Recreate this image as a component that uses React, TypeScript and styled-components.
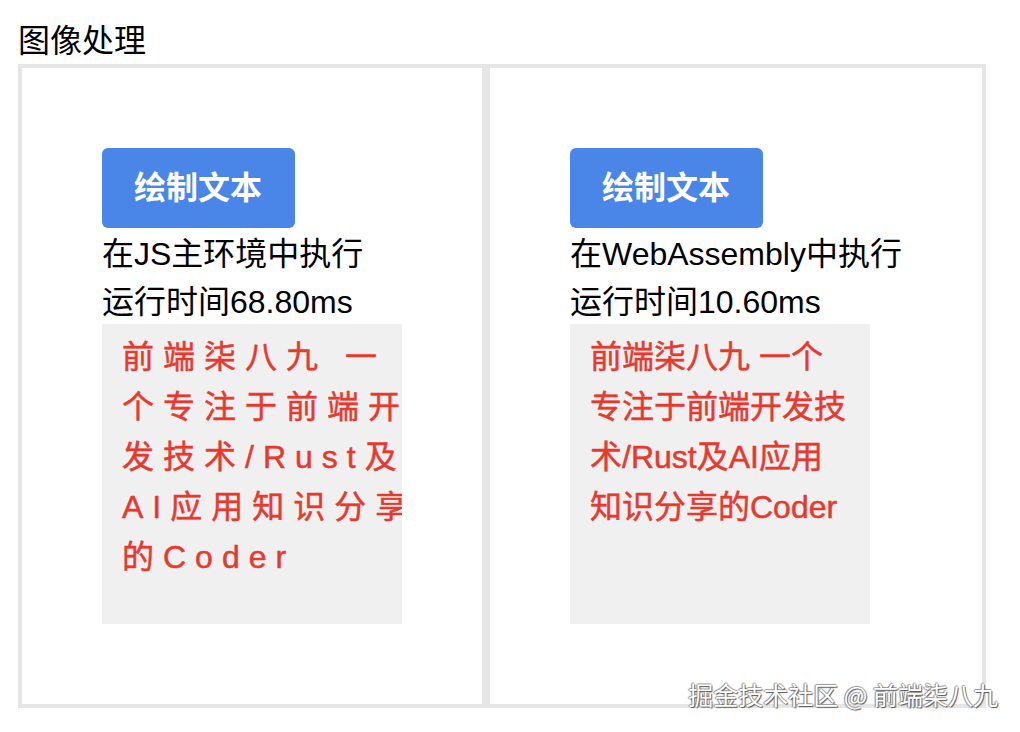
import styled, { createGlobalStyle } from "styled-components";

const GlobalStyle = createGlobalStyle`
  html, body {
    margin: 0;
    padding: 0;
    background: #fff;
  }
  body {
    font-family: "Liberation Sans", "Noto Sans CJK SC", sans-serif;
    color: #000;
  }
`;

const Page = styled.div`
  position: relative;
  width: 1020px;
  height: 732px;
  padding: 18px 0 0 18px;
  box-sizing: border-box;
  overflow: hidden;
`;

const Title = styled.div`
  font-size: 32px;
  line-height: 46px;
`;

const Panels = styled.div`
  display: flex;
  align-items: flex-start;
`;

const Panel = styled.div`
  border: 4px solid #e6e6e6;
  padding: 80px;
  display: flex;
  flex-direction: column;
  align-items: flex-start;
`;

const DrawButton = styled.button`
  background: #4a86e8;
  color: #fff;
  border: none;
  border-radius: 6px;
  padding: 16px 33px 16px 32px;
  font-family: "Liberation Sans", "Noto Sans CJK SC", sans-serif;
  font-size: 32px;
  font-weight: 700;
  line-height: 48px;
  cursor: pointer;
`;

const Info = styled.div`
  font-size: 32px;
  line-height: 48px;
  padding-top: 2px;
  margin-bottom: -2px;
  white-space: nowrap;
`;

const Canvas = styled.div<{ $spacing: number }>`
  width: 300px;
  height: 300px;
  box-sizing: border-box;
  padding: 8px 0 0 20px;
  background: #f0f0f0;
  overflow: hidden;
  color: #e8392f;
  font-size: 32px;
  line-height: 50px;
  letter-spacing: ${(p) => p.$spacing}px;
  -webkit-text-stroke: 0.5px #e8392f;
`;

const CanvasLine = styled.div`
  white-space: pre;
`;

const Watermark = styled.div`
  position: absolute;
  right: 22px;
  top: 677px;
  font-family: "Noto Sans CJK SC", sans-serif;
  font-size: 25px;
  line-height: 34px;
  color: #fff;
  text-shadow: 1px 1px 1px #555, -1px 0 1px #888, 0 -1px 1px #999;
  white-space: nowrap;
`;

const demos = [
  {
    env: "在JS主环境中执行",
    time: "68.80",
    spacing: 9,
    lines: ["前端柒八九 一", "个专注于前端开", "发技术/Rust及", "AI应用知识分享", "的Coder"],
  },
  {
    env: "在WebAssembly中执行",
    time: "10.60",
    spacing: 0,
    lines: ["前端柒八九 一个", "专注于前端开发技", "术/Rust及AI应用", "知识分享的Coder"],
  },
];

const App = () => {
  return (
    <Page>
      <GlobalStyle />
      <Title>图像处理</Title>
      <Panels>
        {demos.map((demo) => (
          <Panel key={demo.env}>
            <DrawButton>绘制文本</DrawButton>
            <Info>{demo.env}</Info>
            <Info>运行时间{demo.time}ms</Info>
            <Canvas $spacing={demo.spacing}>
              {demo.lines.map((line) => (
                <CanvasLine key={line}>{line}</CanvasLine>
              ))}
            </Canvas>
          </Panel>
        ))}
      </Panels>
      <Watermark>掘金技术社区 @ 前端柒八九</Watermark>
    </Page>
  );
};

export default App;
